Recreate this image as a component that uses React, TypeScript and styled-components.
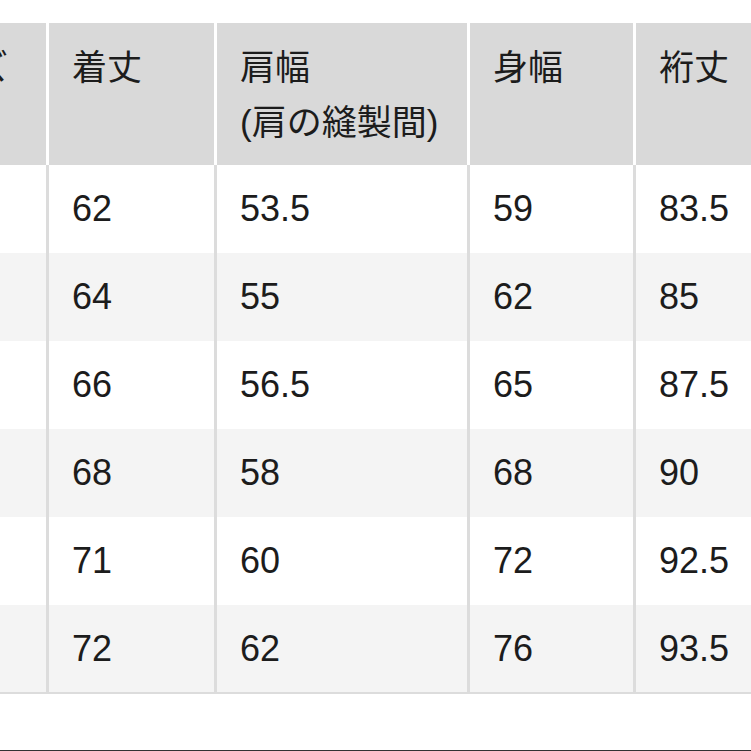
import styled, { createGlobalStyle } from "styled-components";

const GlobalStyle = createGlobalStyle`
  html, body {
    margin: 0;
    padding: 0;
    background: #ffffff;
    overflow: hidden;
  }
  body {
    font-family: "Liberation Sans", "Noto Sans CJK JP", sans-serif;
    color: #1c1c1c;
  }
`;

const Page = styled.div`
  width: 751px;
  height: 751px;
  overflow: hidden;
  padding-top: 23px;
  box-sizing: border-box;
  display: flex;
  flex-direction: column;
`;

const Table = styled.table`
  border-collapse: collapse;
  table-layout: fixed;
  width: 926px;
  margin-left: -122px;
  border-bottom: 2px solid #dcdcdc;
`;

const HeadCell = styled.th`
  background: #d9d9d9;
  height: 142px;
  box-sizing: border-box;
  padding: 17px 0 0 23px;
  vertical-align: top;
  text-align: left;
  font-weight: 400;
  font-size: 35px;
  line-height: 55px;
  border-left: 3px solid #ffffff;
  border-right: 3px solid #ffffff;
  white-space: nowrap;
`;

const Row = styled.tr<{ $shaded: boolean }>`
  background: ${(p) => (p.$shaded ? "#f4f4f4" : "#ffffff")};
`;

const Cell = styled.td`
  height: 88px;
  box-sizing: border-box;
  padding: 0 0 0 23px;
  vertical-align: middle;
  font-size: 36px;
  border-left: 3px solid #dcdcdc;
  border-right: 3px solid #dcdcdc;
  white-space: nowrap;
`;

const Divider = styled.div`
  margin-top: 56px;
  height: 2px;
  background: #333333;
`;

const rows = [
  ["S", "62", "53.5", "59", "83.5"],
  ["M", "64", "55", "62", "85"],
  ["L", "66", "56.5", "65", "87.5"],
  ["XL", "68", "58", "68", "90"],
  ["XXL", "71", "60", "72", "92.5"],
  ["3XL", "72", "62", "76", "93.5"],
];

export default function App() {
  return (
    <Page>
      <GlobalStyle />
      <Table>
        <colgroup>
          <col style={{ width: 168 }} />
          <col style={{ width: 168 }} />
          <col style={{ width: 253 }} />
          <col style={{ width: 166 }} />
          <col style={{ width: 171 }} />
        </colgroup>
        <thead>
          <tr>
            <HeadCell>サイズ</HeadCell>
            <HeadCell>着丈</HeadCell>
            <HeadCell>
              肩幅
              <br />
              (肩の縫製間)
            </HeadCell>
            <HeadCell>身幅</HeadCell>
            <HeadCell>裄丈</HeadCell>
          </tr>
        </thead>
        <tbody>
          {rows.map((r, i) => (
            <Row key={r[0]} $shaded={i % 2 === 1}>
              {r.map((v, j) => (
                <Cell key={j}>{v}</Cell>
              ))}
            </Row>
          ))}
        </tbody>
      </Table>
      <Divider />
    </Page>
  );
}
